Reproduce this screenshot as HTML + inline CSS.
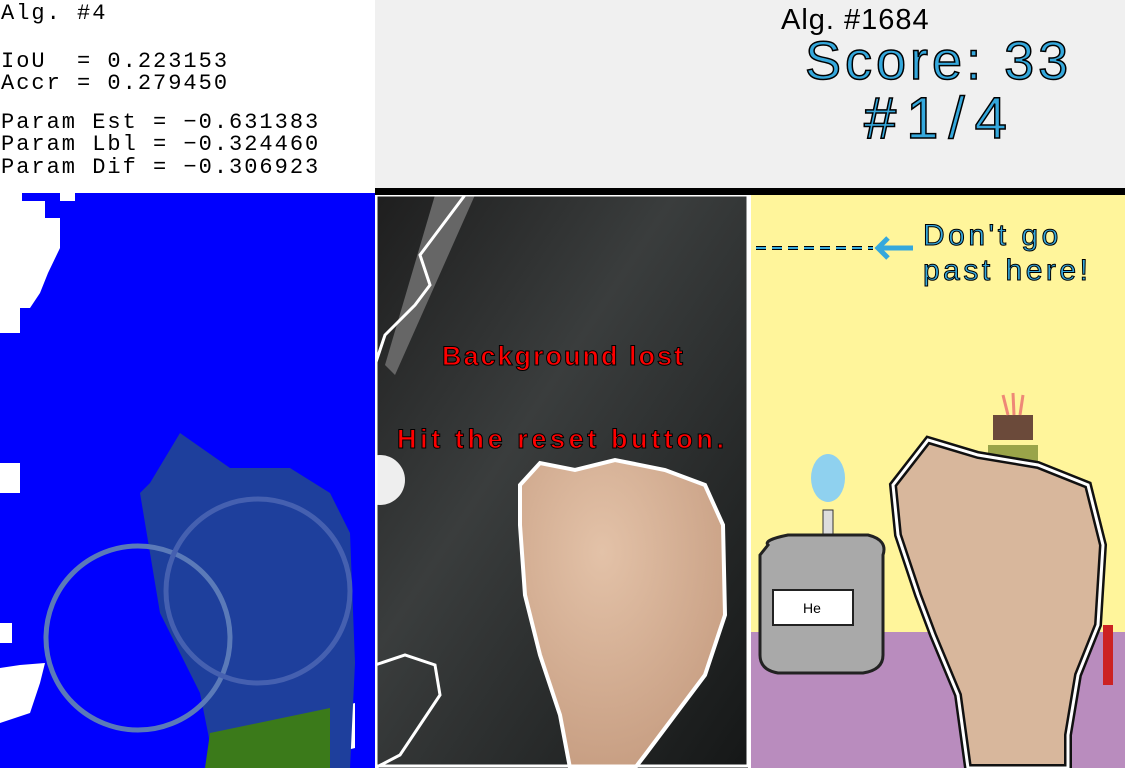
<!DOCTYPE html>
<html><head><style>
body{margin:0;width:1125px;height:768px;overflow:hidden;position:relative;background:#fff;font-family:"Liberation Serif",serif}
.a{position:absolute}
.lt{font-family:"Liberation Mono",monospace;font-size:22px;line-height:22px;color:#000;left:1px;letter-spacing:2px;white-space:pre}
.cv{font-family:"Liberation Sans",sans-serif}
</style></head><body>
<div class="a lt" style="top:3px">Alg. #4</div>
<div class="a lt" style="top:51px">IoU  = 0.223153</div>
<div class="a lt" style="top:73px">Accr = 0.279450</div>
<div class="a lt" style="top:112px">Param Est = −0.631383</div>
<div class="a lt" style="top:134px">Param Lbl = −0.324460</div>
<div class="a lt" style="top:157px">Param Dif = −0.306923</div>

<svg class="a" style="left:0;top:193px" width="375" height="575">
<rect width="375" height="575" fill="#0000fe"/>
<path d="M0 0H22V8H45V25H60V55L48 80L40 100L30 115H20V140L0 140Z" fill="#fff"/>
<path d="M60 0H75V8H60Z" fill="#fff"/>
<path d="M0 270H20V300H0Z" fill="#fff"/>
<path d="M0 430H12V450H0Z" fill="#fff"/>
<path d="M0 475L20 472L45 470L40 490L30 520L0 530Z" fill="#fff"/>
<path d="M335 515L355 510L355 555L335 560Z" fill="#fff"/>
<path d="M150 290L180 240L230 275L290 275L330 300L350 340L355 470L350 575H215L200 500L160 420L140 300Z" fill="#1e3f9c"/>
<path d="M210 540L330 515L330 575H205Z" fill="#3b7a1a"/>
<circle cx="138" cy="445" r="92" fill="none" stroke="#5b7ab8" stroke-width="5"/>
<circle cx="258" cy="398" r="92" fill="none" stroke="#4560b0" stroke-width="5"/>
</svg>

<div class="a" style="left:375px;top:0;width:750px;height:188px;background:#f0f0f0"></div>
<div class="a" style="left:375px;top:188px;width:750px;height:7px;background:#000"></div>
<div class="a cv" style="left:781px;top:4px;font-size:29px;color:#000;letter-spacing:1px">Alg. #1684</div>
<div class="a cv" style="left:805px;top:30px;font-size:54px;color:#35a8dc;-webkit-text-stroke:1.5px #000;letter-spacing:4px">Score: 33</div>
<div class="a cv" style="left:864px;top:85px;font-size:58px;color:#35a8dc;-webkit-text-stroke:1.5px #000;letter-spacing:10px">#1/4</div>

<svg class="a" style="left:375px;top:195px" width="375" height="573">
<defs><linearGradient id="g" x1="0" y1="0" x2="1" y2="1"><stop offset="0" stop-color="#1e1e1e"/><stop offset=".4" stop-color="#3a3d3d"/><stop offset="1" stop-color="#151717"/></linearGradient>
<radialGradient id="s" cx=".4" cy=".3" r=".8"><stop offset="0" stop-color="#e3c2a8"/><stop offset="1" stop-color="#c49a7e"/></radialGradient></defs>
<rect width="375" height="573" fill="url(#g)"/>
<path d="M60 0L100 0L20 180L10 170Z" fill="#666"/>
<circle cx="5" cy="285" r="25" fill="#eee"/>
<path d="M145 290L165 268L200 275L240 265L290 275L330 290L348 330L350 420L330 480L300 520L270 560L260 573H195L185 520L165 460L150 400L145 330Z" fill="url(#s)" stroke="#fff" stroke-width="4"/>
<path d="M0 0H90L60 40L45 60L55 90L40 110L10 140L0 170Z" fill="none" stroke="#fff" stroke-width="3"/>
<path d="M0 470L30 460L60 470L65 500L45 530L25 560L0 573" fill="none" stroke="#fff" stroke-width="3"/>
<rect x="1" y="0" width="372" height="571" fill="none" stroke="#fff" stroke-width="3"/>
<text x="67" y="170" font-family="Liberation Sans,sans-serif" font-weight="bold" font-size="27" letter-spacing="2" fill="#f00" stroke="#000" stroke-width="1">Background lost</text>
<text x="22" y="253" font-family="Liberation Sans,sans-serif" font-weight="bold" font-size="27" letter-spacing="3.6" fill="#f00" stroke="#000" stroke-width="1">Hit the reset button.</text>
</svg>

<svg class="a" style="left:748px;top:195px" width="377" height="573">
<rect width="377" height="573" fill="#fff59b"/>
<rect y="437" width="377" height="136" fill="#b98cbe"/>
<rect width="3" height="573" fill="#fff"/>
<path d="M8 53H125" stroke="#000" stroke-width="4" stroke-dasharray="10 6"/>
<path d="M8 53H125" stroke="#35a8dc" stroke-width="2" stroke-dasharray="10 6"/>
<path d="M140 43L130 53L140 63M130 53H165" stroke="#35a8dc" stroke-width="5" fill="none"/>
<text x="175" y="50" font-family="Liberation Sans,sans-serif" font-size="30" letter-spacing="3.5" fill="#35a8dc" stroke="#000" stroke-width="1">Don't go</text>
<text x="175" y="85" font-family="Liberation Sans,sans-serif" font-size="30" letter-spacing="3.5" fill="#35a8dc" stroke="#000" stroke-width="1">past here!</text>
<ellipse cx="80" cy="283" rx="17" ry="24" fill="#8fd1ef"/>
<rect x="75" y="315" width="10" height="30" fill="#ddd" stroke="#333"/>
<path d="M20 350Q15 345 40 340H120Q140 345 135 360V460Q135 475 115 478H30Q12 475 12 460V360Z" fill="#a9a9a9" stroke="#222" stroke-width="3"/>
<rect x="25" y="395" width="80" height="35" fill="#fff" stroke="#222" stroke-width="2"/>
<text x="55" y="418" font-family="Liberation Sans,sans-serif" font-size="14">He</text>
<path d="M240 250H290V280H240Z" fill="#9aa449"/>
<path d="M245 220H285V245H245Z" fill="#6b4a3a"/>
<path d="M255 200L260 220M265 198L266 220M275 200L272 220" stroke="#e87" stroke-width="3"/>
<path d="M145 290L180 245L230 260L290 270L340 290L355 350L350 430L330 480L320 540L320 573H220L210 500L185 440L170 400L150 340Z" fill="#d8b79c" stroke="#111" stroke-width="8"/>
<path d="M145 290L180 245L230 260L290 270L340 290L355 350L350 430L330 480L320 540L320 573H220L210 500L185 440L170 400L150 340Z" fill="none" stroke="#fff" stroke-width="3"/>
<rect x="355" y="430" width="10" height="60" fill="#c22"/>
</svg>
</body></html>
